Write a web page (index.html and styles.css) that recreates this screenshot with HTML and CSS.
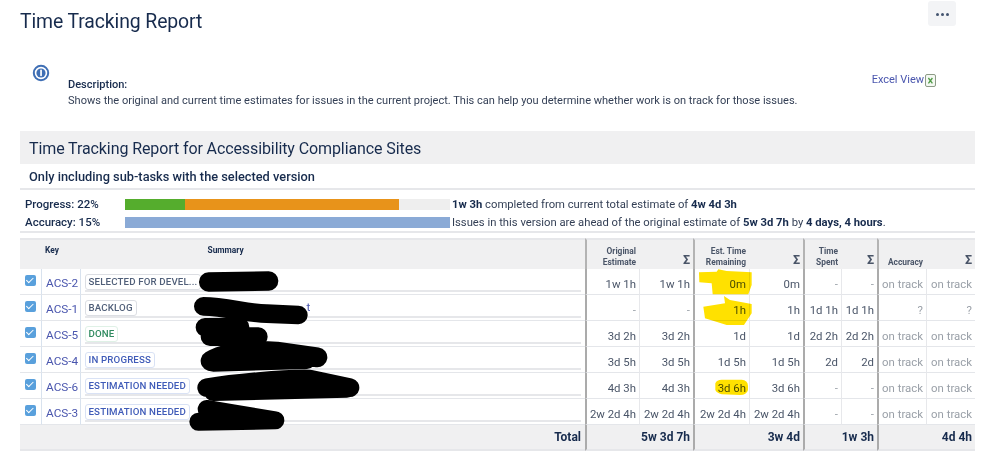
FILE: index.html
```html
<!DOCTYPE html>
<html lang="en">
<head>
<meta charset="utf-8">
<title>Time Tracking Report</title>
<link rel="stylesheet" href="styles.css">
</head>
<body>
<div class="page">
  <header class="top">
    <h1 class="title">Time Tracking Report</h1>
    <button class="more" type="button"><i></i><i></i><i></i></button>
  </header>
  <section class="intro">
    <svg class="info" width="18" height="18" viewBox="0 0 18 18"><circle cx="9" cy="9" r="7.2" fill="#fff" stroke="#3f6fb5" stroke-width="2"/><circle cx="9" cy="9" r="4.6" fill="#3f6fb5"/><rect x="8.2" y="5.6" width="1.7" height="6.6" rx=".8" fill="#fff"/></svg>
    <div class="desc">
      <strong>Description:</strong>
      <p>Shows the original and current time estimates for issues in the current project. This can help you determine whether work is on track for those issues.</p>
    </div>
    <a class="excel">Excel View<svg width="11" height="13" viewBox="0 0 11 13"><rect x=".5" y=".5" width="10" height="12" rx="1.5" fill="#f4f8f2" stroke="#8d9b87"/><path d="M3.4 4l4 5.4M7.4 4l-4 5.4" stroke="#4f9a46" stroke-width="1.3" fill="none"/></svg></a>
  </section>
  <h2 class="report-head">Time Tracking Report for Accessibility Compliance Sites</h2>
  <h3 class="report-sub">Only including sub-tasks with the selected version</h3>
  <section class="stats">
    <div class="stat">
      <b class="stat-label">Progress: 22%</b>
      <div class="bar"><span class="fill green"></span><span class="fill orange"></span></div>
      <span class="stat-text"><b>1w 3h</b> completed from current total estimate of <b>4w 4d 3h</b></span>
    </div>
    <div class="stat">
      <b class="stat-label">Accuracy: 15%</b>
      <div class="bar"><span class="fill blue"></span></div>
      <span class="stat-text">Issues in this version are ahead of the original estimate of <b>5w 3d 7h</b> by <b>4 days, 4 hours</b>.</span>
    </div>
  </section>
  <table class="report">
    <colgroup>
      <col class="c-check"><col class="c-key"><col class="c-sum"><col class="c-a"><col class="c-b"><col class="c-c"><col class="c-d"><col class="c-e"><col class="c-f"><col class="c-g"><col class="c-h">
    </colgroup>
    <thead>
      <tr>
        <th></th>
        <th class="top-cell">Key</th>
        <th class="top-cell sum-head">Summary</th>
        <th class="num major">Original<br>Estimate</th><th class="num minor sigma">Σ</th>
        <th class="num major">Est. Time<br>Remaining</th><th class="num minor sigma">Σ</th>
        <th class="num major">Time<br>Spent</th><th class="num minor sigma">Σ</th>
        <th class="num major">Accuracy</th><th class="num minor sigma">Σ</th>
      </tr>
    </thead>
    <tbody>
      <tr>
        <td class="chk"><span class="box"></span></td><td class="key"><a>ACS-2</a></td>
        <td class="summary"><div class="sum-in"><span class="loz grey">SELECTED FOR DEVEL...</span></div></td>
        <td class="num major">1w 1h</td><td class="num minor">1w 1h</td><td class="num major">0m</td><td class="num minor">0m</td><td class="num major dim">-</td><td class="num minor dim">-</td><td class="num major dim">on track</td><td class="num minor dim">on track</td>
      </tr>
      <tr>
        <td class="chk"><span class="box"></span></td><td class="key"><a>ACS-1</a></td>
        <td class="summary"><div class="sum-in"><span class="loz grey">BACKLOG</span><a class="tail">t</a></div></td>
        <td class="num major dim">-</td><td class="num minor dim">-</td><td class="num major">1h</td><td class="num minor">1h</td><td class="num major">1d 1h</td><td class="num minor">1d 1h</td><td class="num major dim">?</td><td class="num minor dim">?</td>
      </tr>
      <tr>
        <td class="chk"><span class="box"></span></td><td class="key"><a>ACS-5</a></td>
        <td class="summary"><div class="sum-in"><span class="loz green-l">DONE</span></div></td>
        <td class="num major">3d 2h</td><td class="num minor">3d 2h</td><td class="num major">1d</td><td class="num minor">1d</td><td class="num major">2d 2h</td><td class="num minor">2d 2h</td><td class="num major dim">on track</td><td class="num minor dim">on track</td>
      </tr>
      <tr>
        <td class="chk"><span class="box"></span></td><td class="key"><a>ACS-4</a></td>
        <td class="summary"><div class="sum-in"><span class="loz blue-l">IN PROGRESS</span></div></td>
        <td class="num major">3d 5h</td><td class="num minor">3d 5h</td><td class="num major">1d 5h</td><td class="num minor">1d 5h</td><td class="num major">2d</td><td class="num minor">2d</td><td class="num major dim">on track</td><td class="num minor dim">on track</td>
      </tr>
      <tr>
        <td class="chk"><span class="box"></span></td><td class="key"><a>ACS-6</a></td>
        <td class="summary"><div class="sum-in"><span class="loz blue-l">ESTIMATION NEEDED</span></div></td>
        <td class="num major">4d 3h</td><td class="num minor">4d 3h</td><td class="num major">3d 6h</td><td class="num minor">3d 6h</td><td class="num major dim">-</td><td class="num minor dim">-</td><td class="num major dim">on track</td><td class="num minor dim">on track</td>
      </tr>
      <tr>
        <td class="chk"><span class="box"></span></td><td class="key"><a>ACS-3</a></td>
        <td class="summary"><div class="sum-in"><span class="loz blue-l">ESTIMATION NEEDED</span></div></td>
        <td class="num major">2w 2d 4h</td><td class="num minor">2w 2d 4h</td><td class="num major">2w 2d 4h</td><td class="num minor">2w 2d 4h</td><td class="num major dim">-</td><td class="num minor dim">-</td><td class="num major dim">on track</td><td class="num minor dim">on track</td>
      </tr>
    </tbody>
    <tfoot>
      <tr>
        <td class="total-label" colspan="3">Total</td>
        <td class="num major" colspan="2">5w 3d 7h</td>
        <td class="num major" colspan="2">3w 4d</td>
        <td class="num major" colspan="2">1w 3h</td>
        <td class="num major" colspan="2">4d 4h</td>
      </tr>
    </tfoot>
  </table>
</div>
<svg class="marks" width="999" height="467" viewBox="0 0 999 467">
  <g class="hl" fill="#ffe100" transform="translate(570 235) scale(.33333)">
    <path d="M387 112L440 110 445 103 470 108 545 112 545 150 535 178 428 178 425 145 388 142Z"/>
    <path d="M400 215L465 205 462 183 480 195 545 207 545 235 522 270 470 270 405 250Z"/>
    <path d="M436 445Q440 434 455 434L515 434Q533 436 534 452L534 465Q530 480 510 480L455 478Q440 474 436 465Z"/>
  </g>
  <g fill="none" stroke="#000" stroke-linecap="round" stroke-linejoin="round" transform="translate(0 235) scale(.33333)">
    <path stroke-width="58" d="M626 141L806 138"/>
    <path stroke-width="56" d="M610 214C680 215 740 235 800 236L895 240"/>
    <path stroke-width="56" d="M615 277L720 276M630 305L775 305"/>
    <path stroke-width="60" d="M632 378C680 350 760 345 830 350L952 367M640 380L920 372"/>
    <path stroke-width="56" d="M620 458C700 445 850 430 930 432L1050 458M640 470L1040 460"/>
    <path stroke-width="54" d="M620 522L700 535 826 556M595 560L826 556"/>
  </g>
</svg>
</body>
</html>
```
FILE: styles.css
```css
html, body { margin: 0; padding: 0; background: #fff; overflow: hidden; }
body { font-family: Roboto, "Open Sans", sans-serif; color: #172b4d; position: relative; height: 467px; }
.page { display: flex; flex-direction: column; padding: 0 24px 0 20px; }

.top { display: flex; justify-content: space-between; height: 62px; }
.title { margin: 7px 0 0; font-size: 19.4px; line-height: 30px; font-weight: 400; letter-spacing: -.1px; color: #172b4d; }
.more { width: 28px; height: 25px; margin: 1px 19px 0 0; border: 0; padding: 2px 0 0; background: #f3f4f6; border-radius: 3px; display: flex; align-items: center; justify-content: center; gap: 2px; }
.more i { width: 3px; height: 3px; border-radius: 50%; background: #44546f; }

.intro { display: flex; height: 69px; position: relative; }
.info { margin: 2px 0 0 12px; flex: none; }
.desc { margin: 15px 0 0 18px; font-size: 11.04px; line-height: 16px; }
.desc strong { display: block; font-weight: 500; }
.desc p { margin: 0; color: #333f55; }
.excel { position: absolute; top: 11px; right: 39px; display: flex; align-items: center; font-size: 11px; line-height: 14px; color: #4a56ae; }
.excel svg { margin-left: 1px; }

.report-head { margin: 0; height: 33px; line-height: 35px; padding-left: 9px; background: #f0f0f1; font-size: 16px; letter-spacing: -.1px; font-weight: 400; }
.report-sub { margin: 0; height: 24px; line-height: 26px; padding-left: 9px; font-size: 12.8px; font-weight: 500; border-bottom: 2px solid #e6e7ea; }

.stats { display: flex; flex-direction: column; padding: 5px 0 4px; border-bottom: 2px solid #e6e7ea; height: 32px; }
.stat { display: flex; align-items: center; height: 18px; font-size: 11.25px; flex: none; }
.stat-label { width: 105px; box-sizing: border-box; padding-left: 5px; flex: none; font-weight: 500; font-size: 11.5px; }
.bar { width: 325px; height: 11px; background: #eee; display: flex; flex: none; }
.fill { display: block; height: 100%; }
.green { width: 60px; background: #55ad2d; }
.orange { width: 214px; background: #e8931a; }
.blue { width: 325px; background: #8aaad6; }
.stat-text { margin-left: 2px; color: #333f55; white-space: nowrap; }
.stat-text b { font-weight: 700; color: #172b4d; }

.report { margin-top: 5px; width: 955px; border-collapse: separate; border-spacing: 0; table-layout: fixed; font-size: 11.4px; }
.c-check { width: 21px; } .c-key { width: 39.5px; } .c-sum { width: 504.5px; }
.c-a { width: 54px; } .c-b { width: 54px; } .c-c { width: 56px; } .c-d { width: 54px; }
.c-e { width: 38px; } .c-f { width: 36px; } .c-g { width: 49px; } .c-h { width: 49px; }
.report th { height: 31px; padding: 0 3px 1px; background: #f0f0f1; font-size: 8.4px; line-height: 11px; font-weight: 700; vertical-align: bottom; border-top: 2px solid #e6e7ea; box-sizing: border-box; text-align: left; }
.report th.top-cell { vertical-align: top; padding: 5px 4px 0; }
.report th.sum-head { padding-left: 127px; }
.report th.num { text-align: right; }
.report th.sigma { font-size: 12.5px; line-height: 14px; padding-bottom: 2px; }
.report td { height: 26px; padding: 0; border-bottom: 1px solid #e4e6ea; box-sizing: border-box; }
.report .num { padding-right: 3px; text-align: right; color: #4a5568; white-space: nowrap; }
.report .major { border-left: 2px solid #ababab; }
.report .minor { border-left: 1px solid #e7e8eb; }
.report th.minor { border-left: 0; }
.report th.major { border-left: 2px solid #b3b3b3; }
.report td.dim { color: #9aa0a8; }
.report tbody .num { padding-top: 4px; }
.report td.chk { padding-left: 5px; vertical-align: top; }
.box { display: block; width: 11px; height: 11px; margin-top: 6px; border-radius: 2px; background: #59a0dc; position: relative; }
.box::after { content: ""; position: absolute; left: 3.2px; top: 1.2px; width: 3px; height: 5.5px; border: solid #fff; border-width: 0 1.6px 1.6px 0; transform: rotate(45deg); }
.report td.key { border-left: 1px solid #d8e2ee; border-right: 1px solid #d8e2ee; padding: 2px 0 0 4px; font-size: 11.8px; color: #4a56ae; }
.report td.summary { padding: 0 4px; vertical-align: top; }
.sum-in { display: flex; align-items: flex-start; height: 23px; border-bottom: 2px solid #e6e7ea; padding-top: 5px; box-sizing: border-box; position: relative; }
.loz { border: 1px solid #dfe1e6; border-radius: 3px; font-size: 9.7px; line-height: 14px; height: 16px; box-sizing: border-box; padding: 0 3px; font-weight: 500; white-space: nowrap; letter-spacing: .15px; }
.loz.grey { color: #505f79; border-color: #dcdee3; }
.loz.green-l { color: #2f8a5f; border-color: #dff1e6; }
.loz.blue-l { color: #3f5bb8; border-color: #d9e2f5; }
.tail { position: absolute; left: 222px; top: 5px; color: #4a56ae; font-size: 11.8px; }
.report td.total-label { text-align: right; padding-right: 4px; font-weight: 700; }
.report tfoot td { height: 26px; background: #f0f0f1; font-weight: 700; color: #172b4d; font-size: 12px; border-bottom: 2px solid #e6e7ea; }
.report tfoot .num { color: #172b4d; }

.marks { position: absolute; left: 0; top: 0; pointer-events: none; }
.hl { mix-blend-mode: multiply; }
```
